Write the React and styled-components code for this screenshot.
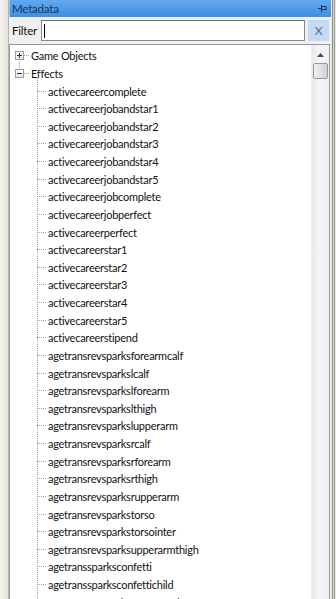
import React from "react";
import styled, { createGlobalStyle } from "styled-components";

const Global = createGlobalStyle`
  html, body { margin: 0; padding: 0; }
  body { width: 336px; height: 599px; overflow: hidden; background: #eceae2; }
  #root { height: 599px; }
`;

const items = [
  "activecareercomplete",
  "activecareerjobandstar1",
  "activecareerjobandstar2",
  "activecareerjobandstar3",
  "activecareerjobandstar4",
  "activecareerjobandstar5",
  "activecareerjobcomplete",
  "activecareerjobperfect",
  "activecareerperfect",
  "activecareerstar1",
  "activecareerstar2",
  "activecareerstar3",
  "activecareerstar4",
  "activecareerstar5",
  "activecareerstipend",
  "agetransrevsparksforearmcalf",
  "agetransrevsparkslcalf",
  "agetransrevsparkslforearm",
  "agetransrevsparkslthigh",
  "agetransrevsparkslupperarm",
  "agetransrevsparksrcalf",
  "agetransrevsparksrforearm",
  "agetransrevsparksrthigh",
  "agetransrevsparksrupperarm",
  "agetransrevsparkstorso",
  "agetransrevsparkstorsointer",
  "agetransrevsparksupperarmthigh",
  "agetranssparksconfetti",
  "agetranssparksconfettichild",
  "agetransrevsparksforearmcalf",
];

const Window = styled.div`
  display: flex;
  height: 599px;
  font-family: Lato, "Open Sans", sans-serif;
  font-size: 11px;
  letter-spacing: -0.2px;
  color: #111;
`;

const LeftFrame = styled.div`
  width: 8px;
  flex: none;
  background: linear-gradient(90deg, #f4f3ee 0, #e4e2d8 100%);
  border-right: 1px solid #b4b4ac;
`;

const RightFrame = styled.div`
  width: 5px;
  flex: none;
  background: linear-gradient(90deg, #e9e9e9 0, #e9e9e9 1px, #8e8e8e 1px, #8e8e8e 2px, #d8d6cc 2px, #d8d6cc 3px, #9c9a8c 3px, #9c9a8c 4px, #eceae2 4px);
`;

const Main = styled.div`
  flex: 1;
  display: flex;
  flex-direction: column;
  min-width: 0;
  background: #f0f0f0;
`;

const TitleBar = styled.div`
  height: 17px;
  flex: none;
  display: flex;
  align-items: center;
  justify-content: space-between;
  padding: 0 4px 0 2px;
  background: linear-gradient(180deg, #62a8ef 0%, #3f8fe2 100%);
  color: #143760;
  border-left: 1px solid #9fc4ea;
`;

const Title = styled.span`
  font-size: 11.5px;
  line-height: 17px;
`;

const FilterRow = styled.div`
  height: 27px;
  flex: none;
  display: flex;
  align-items: center;
  gap: 4px;
  padding: 0 2px 0 3px;
`;

const FilterLabel = styled.span`
  font-size: 11.5px;
  color: #111;
`;

const FilterInput = styled.div`
  flex: 1;
  height: 19px;
  background: #fff;
  border: 1px solid #8a8a8a;
  border-top-color: #6f6f6f;
  display: flex;
  align-items: center;
  padding-left: 2px;
`;

const Caret = styled.span`
  width: 1px;
  height: 14px;
  background: #000;
`;

const ClearButton = styled.div`
  width: 21px;
  height: 21px;
  flex: none;
  margin-left: -1px;
  background: #c4d9f3;
  color: #5a6b80;
  display: flex;
  align-items: center;
  justify-content: center;
  font-size: 12px;
`;

const TreePanel = styled.div`
  flex: 1;
  display: flex;
  min-height: 0;
  background: #fff;
  border: 1px solid #9a9a9a;
  border-bottom: none;
  margin-right: 1px;
  overflow: hidden;
`;

const TreeList = styled.div`
  flex: 1;
  padding-top: 2px;
  padding-left: 5px;
  min-width: 0;
`;

const Row = styled.div`
  position: relative;
  height: 17.64px;
  display: flex;
  align-items: center;
  padding-left: ${(p) => p.$indent}px;
  white-space: nowrap;
`;

const VLine = styled.div`
  position: absolute;
  left: ${(p) => p.$x}px;
  top: ${(p) => p.$top ?? 0}px;
  bottom: ${(p) => p.$bottom ?? 0}px;
  border-left: 1px dotted #a0a0a0;
`;

const HLine = styled.span`
  width: ${(p) => p.$w}px;
  border-top: 1px dotted #a0a0a0;
  flex: none;
  margin-right: 2px;
`;

const Expander = styled.span`
  width: 7px;
  height: 7px;
  flex: none;
  border: 1px solid #9a9a9a;
  background: linear-gradient(180deg, #fff, #e6e6e6);
  position: relative;
  z-index: 1;
  &::before {
    content: "";
    position: absolute;
    left: 1px;
    top: 3px;
    width: 5px;
    height: 1px;
    background: #333;
  }
  &::after {
    content: "";
    display: ${(p) => (p.$open ? "none" : "block")};
    position: absolute;
    left: 3px;
    top: 1px;
    width: 1px;
    height: 5px;
    background: #333;
  }
`;

const Label = styled.span`
  font-size: 11px;
  letter-spacing: -0.25px;
  color: #111;
`;

const Children = styled.div`
  position: relative;
`;

const Scrollbar = styled.div`
  width: 17px;
  flex: none;
  background: linear-gradient(90deg, #e8e8e8, #f5f5f5 40%, #f0f0f0);
  border-left: 1px solid #ececec;
  display: flex;
  flex-direction: column;
  align-items: center;
  padding-top: 3px;
`;

const ArrowUp = styled.div`
  width: 15px;
  height: 14px;
  display: flex;
  align-items: center;
  justify-content: center;
`;

const Thumb = styled.div`
  width: 13px;
  height: 14px;
  margin-top: 1px;
  border: 1px solid #979797;
  border-radius: 2px;
  background: linear-gradient(90deg, #f2f2f2, #e2e2e2 50%, #d0d0d0);
`;

export default function App() {
  return (
    <>
      <Global />
      <Window>
        <LeftFrame />
        <Main>
          <TitleBar>
            <Title>Metadata</Title>
            <svg width="9" height="9" viewBox="0 0 9 9">
              <rect x="3.5" y="2.5" width="4.5" height="3" fill="none" stroke="#143760" strokeWidth="1" />
              <rect x="0" y="4" width="3" height="1" fill="#143760" />
              <rect x="3" y="1" width="1" height="7" fill="#143760" />
              <rect x="4" y="5" width="4" height="1" fill="#143760" />
            </svg>
          </TitleBar>
          <FilterRow>
            <FilterLabel>Filter</FilterLabel>
            <FilterInput>
              <Caret />
            </FilterInput>
            <ClearButton>X</ClearButton>
          </FilterRow>
          <TreePanel>
            <TreeList>
              <Row $indent={0}>
                <VLine $x={4} $top={9} $bottom={-9} />
                <Expander />
                <HLine $w={5} />
                <Label>Game Objects</Label>
              </Row>
              <Row $indent={0}>
                <Expander $open />
                <HLine $w={5} />
                <Label>Effects</Label>
              </Row>
              <Children>
                <VLine $x={22} $top={-4} $bottom={0} />
                {items.map((name, i) => (
                  <Row key={i} $indent={22}>
                    <HLine $w={9} />
                    <Label>{name}</Label>
                  </Row>
                ))}
              </Children>
            </TreeList>
            <Scrollbar>
              <ArrowUp>
                <svg width="7" height="4" viewBox="0 0 7 4">
                  <path d="M0 4 L3.5 0 L7 4 Z" fill="#4d4d4d" />
                </svg>
              </ArrowUp>
              <Thumb />
            </Scrollbar>
          </TreePanel>
        </Main>
        <RightFrame />
      </Window>
    </>
  );
}
